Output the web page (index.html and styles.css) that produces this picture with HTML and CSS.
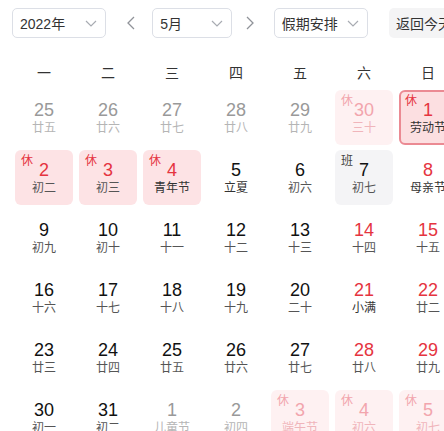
FILE: index.html
```html
<!DOCTYPE html>
<html lang="zh">
<head>
<meta charset="utf-8">
<link rel="stylesheet" href="styles.css">
</head>
<body>
<div class="cal">
  <div class="toolbar">
    <div class="select sel-year"><span>2022年</span><svg class="chev" viewBox="0 0 12 7" width="12" height="7"><path d="M1 1l5 5 5-5" fill="none" stroke="#a8abb2" stroke-width="1.2"/></svg></div>
    <span class="arrow arrow-prev"><svg viewBox="0 0 8 14" width="8" height="14"><path d="M7 1L1 7l6 6" fill="none" stroke="#909399" stroke-width="1.3"/></svg></span>
    <div class="select sel-month"><span>5月</span><svg class="chev" viewBox="0 0 12 7" width="12" height="7"><path d="M1 1l5 5 5-5" fill="none" stroke="#a8abb2" stroke-width="1.2"/></svg></div>
    <span class="arrow arrow-next"><svg viewBox="0 0 8 14" width="8" height="14"><path d="M1 1l6 6-6 6" fill="none" stroke="#909399" stroke-width="1.3"/></svg></span>
    <div class="select sel-hol"><span>假期安排</span><svg class="chev" viewBox="0 0 12 7" width="12" height="7"><path d="M1 1l5 5 5-5" fill="none" stroke="#a8abb2" stroke-width="1.2"/></svg></div>
    <button class="today-btn">返回今天</button>
  </div>

  <div class="weekdays">
    <span>一</span><span>二</span><span>三</span><span>四</span><span>五</span><span>六</span><span>日</span>
  </div>

  <div class="grid">
    <div class="cell other"><b>25</b><i>廿五</i></div>
    <div class="cell other"><b>26</b><i>廿六</i></div>
    <div class="cell other"><b>27</b><i>廿七</i></div>
    <div class="cell other"><b>28</b><i>廿八</i></div>
    <div class="cell other"><b>29</b><i>廿九</i></div>
    <div class="cell other rest"><em>休</em><b>30</b><i>三十</i></div>
    <div class="cell rest selected"><em>休</em><b>1</b><i class="fest">劳动节</i></div>

    <div class="cell rest"><em>休</em><b>2</b><i>初二</i></div>
    <div class="cell rest"><em>休</em><b>3</b><i>初三</i></div>
    <div class="cell rest"><em>休</em><b>4</b><i class="fest">青年节</i></div>
    <div class="cell"><b>5</b><i class="fest">立夏</i></div>
    <div class="cell"><b>6</b><i>初六</i></div>
    <div class="cell work"><em>班</em><b>7</b><i>初七</i></div>
    <div class="cell weekend"><b>8</b><i class="fest">母亲节</i></div>

    <div class="cell"><b>9</b><i>初九</i></div>
    <div class="cell"><b>10</b><i>初十</i></div>
    <div class="cell"><b>11</b><i>十一</i></div>
    <div class="cell"><b>12</b><i>十二</i></div>
    <div class="cell"><b>13</b><i>十三</i></div>
    <div class="cell weekend"><b>14</b><i>十四</i></div>
    <div class="cell weekend"><b>15</b><i>十五</i></div>

    <div class="cell"><b>16</b><i>十六</i></div>
    <div class="cell"><b>17</b><i>十七</i></div>
    <div class="cell"><b>18</b><i>十八</i></div>
    <div class="cell"><b>19</b><i>十九</i></div>
    <div class="cell"><b>20</b><i>二十</i></div>
    <div class="cell weekend"><b>21</b><i class="fest">小满</i></div>
    <div class="cell weekend"><b>22</b><i>廿二</i></div>

    <div class="cell"><b>23</b><i>廿三</i></div>
    <div class="cell"><b>24</b><i>廿四</i></div>
    <div class="cell"><b>25</b><i>廿五</i></div>
    <div class="cell"><b>26</b><i>廿六</i></div>
    <div class="cell"><b>27</b><i>廿七</i></div>
    <div class="cell weekend"><b>28</b><i>廿八</i></div>
    <div class="cell weekend"><b>29</b><i>廿九</i></div>

    <div class="cell"><b>30</b><i>初一</i></div>
    <div class="cell"><b>31</b><i>初二</i></div>
    <div class="cell other"><b>1</b><i>儿童节</i></div>
    <div class="cell other"><b>2</b><i>初四</i></div>
    <div class="cell other rest"><em>休</em><b>3</b><i>端午节</i></div>
    <div class="cell other rest"><em>休</em><b>4</b><i>初六</i></div>
    <div class="cell other rest"><em>休</em><b>5</b><i>初七</i></div>
  </div>
</div>
</body>
</html>
```

FILE: styles.css
```css
html, body {
  margin: 0;
  padding: 0;
  background: #fff;
  overflow: hidden;
}
body {
  font-family: "Liberation Sans", "Noto Sans CJK SC", sans-serif;
  color: #303133;
}
.cal {
  width: 448px;
  padding: 8px 0 0 12px;
}
.toolbar {
  display: flex;
  align-items: center;
  height: 30px;
}
.select {
  box-sizing: border-box;
  height: 30px;
  border: 1px solid #dcdfe6;
  border-radius: 5px;
  display: flex;
  align-items: center;
  justify-content: space-between;
  padding: 0 8px 0 7px;
  font-size: 14px;
  color: #333;
}
.sel-year { width: 95px; }
.sel-month { width: 80px; }
.sel-hol { width: 95px; }
.chev { display: block; }
.arrow {
  display: flex;
  align-items: center;
  justify-content: center;
  width: 14px;
}
.arrow-prev { margin: 0 14px 0 18px; }
.arrow-next { margin: 0 17px 0 11px; }
.today-btn {
  margin-left: 21px;
  height: 30px;
  border: none;
  background: #f4f4f5;
  border-radius: 5px;
  padding: 0 8px 0 7px;
  font-family: inherit;
  font-size: 14px;
  color: #333;
  white-space: nowrap;
}
.weekdays {
  display: grid;
  grid-template-columns: repeat(7, 64px);
  margin-top: 20px;
  height: 30px;
  line-height: 30px;
  text-align: center;
  font-size: 14px;
  color: #333;
}
.weekdays span { display: block; }
.grid {
  display: grid;
  grid-template-columns: repeat(7, 58px);
  column-gap: 6px;
  row-gap: 5px;
  grid-auto-rows: 55px;
  margin: 2px 0 0 3px;
}
.cell {
  position: relative;
  box-sizing: border-box;
  border-radius: 6px;
  padding-top: 9px;
  text-align: center;
}
.cell b {
  display: block;
  font-weight: normal;
  font-size: 18px;
  line-height: 22px;
  color: #111;
}
.cell i {
  display: block;
  font-style: normal;
  font-size: 12px;
  line-height: 14px;
  color: #555;
}
.cell i.fest { color: #333; }
.cell em {
  position: absolute;
  top: 4px;
  left: 6px;
  font-style: normal;
  font-size: 12px;
  line-height: 14px;
  color: #e5343f;
}
.weekend b { color: #e5343f; }
.rest { background: #fde3e5; }
.rest b { color: #e5343f; }
.work { background: #f4f4f6; }
.work em { color: #444; }
.selected {
  border: 2px solid #eb8a93;
  background: #fcdfe1;
  padding-top: 7px;
}
.selected em { top: 2px; left: 4px; }
.other b { color: #999; }
.other i { color: #b5b5b5; }
.other.rest { background: #fef1f2; }
.other.rest b, .other.rest em { color: #f2a5ad; }
.other.rest i { color: #f0b5bb; }
```
